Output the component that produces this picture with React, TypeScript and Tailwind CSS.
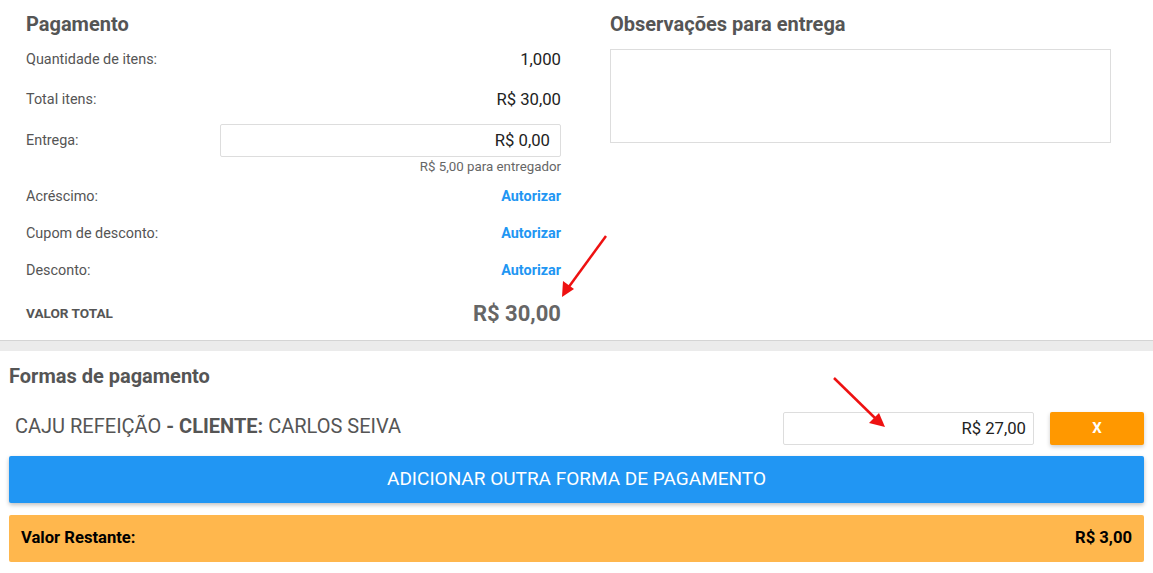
import React from "react";

const font = { fontFamily: "Roboto, 'Noto Sans', sans-serif" };

function Row({ label, children, className = "" }: { label: string; children: React.ReactNode; className?: string }) {
  return (
    <div className={`flex items-center justify-between ${className}`}>
      <span className="text-[14.4px] text-[#555]">{label}</span>
      {children}
    </div>
  );
}

export default function App() {
  return (
    <div className="w-[1153px] h-[573px] bg-white relative overflow-hidden" style={font}>
      {/* top section */}
      <div className="flex h-[340px]">
        <div className="w-[535px] ml-[26px] pt-[10px]">
          <h2 className="text-[20px] font-bold text-[#555] leading-[28px]">Pagamento</h2>
          <Row label="Quantidade de itens:" className="h-[26px] mt-[9px]">
            <span className="text-[16.7px] text-[#222]">1,000</span>
          </Row>
          <Row label="Total itens:" className="h-[26px] mt-[14px]">
            <span className="text-[16.7px] text-[#222]">R$ 30,00</span>
          </Row>
          <Row label="Entrega:" className="h-[33px] mt-[11px]">
            <div className="w-[341px] h-[33px] border border-[#ddd] rounded-[2px] flex items-center justify-end pr-[10px]">
              <span className="text-[16.7px] text-[#222]">R$ 0,00</span>
            </div>
          </Row>
          <div className="text-right text-[13.3px] text-[#666] leading-[16px] mt-[2px]">R$ 5,00 para entregador</div>
          <Row label="Acréscimo:" className="h-[20px] mt-[12px]">
            <span className="text-[14.4px] font-bold text-[#2196f3]">Autorizar</span>
          </Row>
          <Row label="Cupom de desconto:" className="h-[20px] mt-[17px]">
            <span className="text-[14.4px] font-bold text-[#2196f3]">Autorizar</span>
          </Row>
          <Row label="Desconto:" className="h-[20px] mt-[17px]">
            <span className="text-[14.4px] font-bold text-[#2196f3]">Autorizar</span>
          </Row>
          <div className="flex items-center justify-between h-[28px] mt-[18px]">
            <span className="text-[13.6px] font-bold text-[#555]">VALOR TOTAL</span>
            <span className="text-[22px] font-bold text-[#666]">R$ 30,00</span>
          </div>
        </div>
        <div className="ml-[49px] w-[501px] pt-[10px]">
          <h2 className="text-[20px] font-bold text-[#555] leading-[28px]">Observações para entrega</h2>
          <div className="mt-[11px] h-[94px] border border-[#ddd]" />
        </div>
      </div>

      {/* separator band */}
      <div className="h-[11px] bg-[#ebebeb] border-t border-[#d4d4d4]" />

      {/* bottom section */}
      <div className="px-[9px]">
        <h2 className="text-[20px] font-bold text-[#555] leading-[28px] mt-[11px]">Formas de pagamento</h2>
        <div className="flex items-center h-[33px] mt-[22px]">
          <span className="ml-[6px] mb-[5px] text-[20px] text-[#555] flex-1">
            CAJU REFEIÇÃO <b>- CLIENTE:</b> CARLOS SEIVA
          </span>
          <div className="w-[251px] h-[33px] border border-[#ddd] rounded-[2px] flex items-center justify-end pr-[7px]">
            <span className="text-[16.7px] text-[#222]">R$ 27,00</span>
          </div>
          <button className="ml-[16px] w-[94px] h-[33px] bg-[#ff9800] rounded-[2px] text-white font-bold text-[15px] shadow-[0_2px_4px_rgba(0,0,0,0.2)]">
            X
          </button>
        </div>
        <button className="mt-[11px] w-full h-[47px] bg-[#2196f3] rounded-[2px] text-white text-[19px] shadow-[0_2px_4px_rgba(0,0,0,0.25)]">
          ADICIONAR OUTRA FORMA DE PAGAMENTO
        </button>
        <div className="mt-[12px] h-[47px] bg-[#ffb74d] rounded-[2px] flex items-center justify-between px-[12px]">
          <span className="text-[16.6px] font-bold text-black">Valor Restante:</span>
          <span className="text-[16.6px] font-bold text-black">R$ 3,00</span>
        </div>
      </div>

      {/* red arrows */}
      <svg className="absolute left-0 top-0 pointer-events-none" width="1153" height="573">
        <line x1="606" y1="236" x2="568" y2="288" stroke="#ee1111" strokeWidth="2.5" />
        <polygon points="562,297 563,281 574,289" fill="#ee1111" />
        <line x1="834" y1="378" x2="876" y2="419" stroke="#ee1111" strokeWidth="2.5" />
        <polygon points="885,427 869,423 879,413" fill="#ee1111" />
      </svg>
    </div>
  );
}
